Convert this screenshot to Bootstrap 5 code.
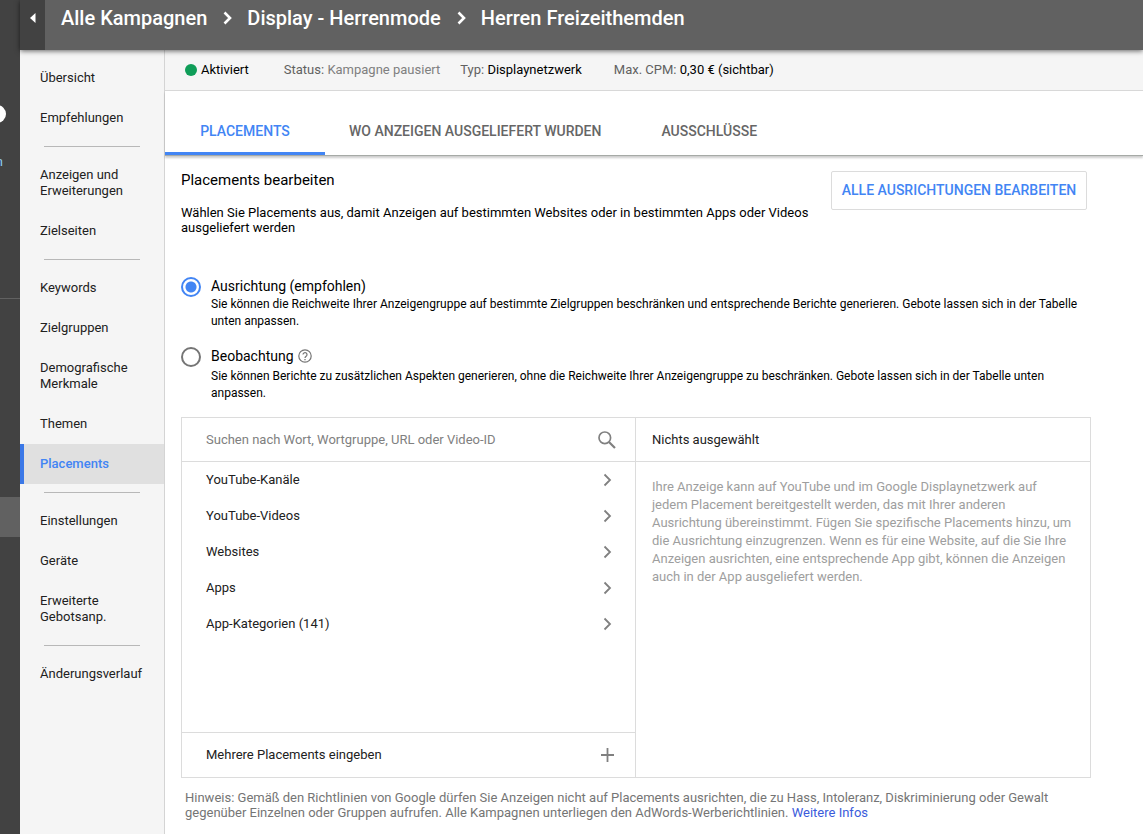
<!DOCTYPE html>
<html lang="de">
<head>
<meta charset="utf-8">
<meta name="viewport" content="width=device-width, initial-scale=1">
<title>Herren Freizeithemden – Placements</title>
<link href="https://cdn.jsdelivr.net/npm/bootstrap@5.3.0/dist/css/bootstrap.min.css" rel="stylesheet">
<style>
  :root { --blue: #4285f4; --line: #dcdcdc; --dark: #424242; }
  body { font-family: Roboto, "Liberation Sans", sans-serif; font-size: 13px; line-height: 16px; color: #212121; background: #fff; }
  .rail { width: 20px; background: var(--dark); overflow: hidden; }
  .rail-top { height: 105px; }
  .rail-dot { width: 20px; height: 18px; border-radius: 9px; background: #fff; margin-left: -14px; }
  .rail-name { margin-top: 31px; height: 143px; display: flex; justify-content: flex-end; width: 3px; color: #8ecdf5; }
  .rail-rule { border-top: 1px solid #616161; height: 199px; margin-top: 1px; }
  .rail-current { height: 40px; background: #616161; }

  .topbar { height: 50px; background: #616161; box-shadow: 0 1px 5px rgba(0,0,0,.6); z-index: 2; }
  .topbar .toggle { width: 25px; background: var(--dark); height: 50px; padding: 11px 0 0 8px; }
  .crumbs { font-size: 20px; line-height: 24px; font-weight: 500; padding: 6px 0 0 16px; }
  .crumbs a, .crumbs span { color: #fff; text-decoration: none; }

  .side { width: 145px; background: #f5f5f5; border-right: 1px solid #d4d4d4; padding-top: 8px; }
  .side .nav-link { color: #212121; padding: 12px 8px 12px 16px; border-left: 4px solid transparent; }
  .side .nav-link.active { color: var(--blue); background: #e0e0e0; border-color: #3b78e7; font-weight: 500; }
  .side hr { margin: 8px 24px; border-color: #b8b8b8; opacity: 1; }

  .status { height: 41px; background: #f5f5f5; border-bottom: 1px solid #d8d8d8; padding-left: 20px; color: #000; }
  .status .key { color: #616161; }
  .status .pale { color: #808080; }
  .status .state { margin-right: 35px; }
  .dot { width: 12px; height: 12px; border-radius: 50%; background: #0f9d58; }

  .tabs { height: 65px; padding-top: 20px; border-bottom: 1px solid #a6aaa6; box-shadow: 0 2px 2px rgba(0,0,0,.2); font-size: 14px; font-weight: 500; }
  .tabs .nav-link { color: #666; padding: 12px 24px; height: 44px; text-transform: uppercase; border-bottom: 3px solid transparent; }
  .tabs .nav-link.active { width: 160px; text-align: center; color: var(--blue); border-color: var(--blue); padding: 12px 0; }
  .tabs .nav-link:last-child { margin-left: 12px; }

  .main-area { padding: 14px 52px 12px 16px; color: #000; }
  .intro { padding-right: 4px; min-height: 107px; }
  .intro h1 { font-size: 15px; line-height: 20px; font-weight: 400; margin: 0 0 15px; }
  .intro p { line-height: 15px; margin: 0; }
  .btn-edit { color: var(--blue); border: 1px solid var(--line); border-radius: 2px; font-size: 14px; line-height: 21px; font-weight: 500; min-width: 256px; padding: 8px; margin: 1px 0 0 16px; white-space: nowrap; text-transform: uppercase; }

  .choice { min-height: 0; padding: 0; margin: 0; gap: 10px; }
  .choice .form-check-input { width: 20px; height: 20px; flex: none; margin: 0; float: none; border: 2px solid #757575; background: #fff; }
  .choice .form-check-input:checked { border-color: var(--blue); background: radial-gradient(circle, var(--blue) 5px, #fff 6px); }
  .choice label { font-size: 14px; line-height: 18px; }
  .choice p { font-size: 12px; line-height: 17px; margin: 1px 0 0; }
  .choice + .choice { margin-top: 17px; }
  .choice + .choice p { margin-top: 3px; }
  .help { vertical-align: -2px; margin-left: 1px; }

  .picker { border: 1px solid var(--line); color: #212121; min-height: 361px; margin-top: 15px; }
  .pick-left { border-right: 1px solid var(--line); }
  .pick-head { height: 44px; border-bottom: 1px solid var(--line); }
  .pick-left .pick-head { padding: 0 19px 0 24px; }
  .pick-head input { font-size: 13px; line-height: 16px; color: #212121; }
  .pick-head input::placeholder { color: #808080; opacity: 1; }
  .pick-left button { border: 0; background: none; font-size: 13px; line-height: 16px; color: #212121; padding: 0 16px 0 24px; height: 36px; }
  .pick-left .bulk { border-top: 1px solid var(--line); height: 45px; }
  .empty { color: #9e9e9e; line-height: 18px; padding: 16px; margin: 0; }
  .hint { color: #757575; font-size: 13px; line-height: 15px; padding: 12px 16px 0 4px; margin: 0; }
  .hint a { color: #3b5bdb; text-decoration: none; }
</style>
</head>
<body>
<div class="d-flex min-vh-100">
  <aside class="rail flex-shrink-0">
    <div class="rail-top"></div>
    <div class="rail-dot"></div>
    <div class="rail-name"><span>Kampagnen</span></div>
    <div class="rail-rule"></div>
    <div class="rail-current"></div>
  </aside>

  <div class="flex-grow-1 d-flex flex-column">
    <header class="topbar d-flex position-relative">
      <button class="toggle border-0 text-start d-flex" type="button" aria-label="Navigation einklappen">
        <svg width="12" height="14" viewBox="0 0 12 14"><path d="M7.5 2v10L2 7z" fill="#fff"/></svg>
      </button>
      <nav class="crumbs d-flex" aria-label="Breadcrumb">
        <a href="#">Alle Kampagnen</a>
        <svg width="40" height="24" viewBox="0 0 40 24" fill="none" stroke="#fff" stroke-width="2.6"><path d="M17.5 6.5l5.5 5.5-5.5 5.5"/></svg>
        <a href="#">Display - Herrenmode</a>
        <svg width="40" height="24" viewBox="0 0 40 24" fill="none" stroke="#fff" stroke-width="2.6"><path d="M17.5 6.5l5.5 5.5-5.5 5.5"/></svg>
        <span>Herren Freizeithemden</span>
      </nav>
    </header>

    <div class="d-flex flex-grow-1">
      <nav class="side flex-shrink-0 nav flex-column flex-nowrap">
        <a class="nav-link" href="#">Übersicht</a>
        <a class="nav-link" href="#">Empfehlungen</a>
        <hr>
        <a class="nav-link" href="#">Anzeigen und Erweiterungen</a>
        <a class="nav-link" href="#">Zielseiten</a>
        <hr>
        <a class="nav-link" href="#">Keywords</a>
        <a class="nav-link" href="#">Zielgruppen</a>
        <a class="nav-link" href="#">Demografische Merkmale</a>
        <a class="nav-link" href="#">Themen</a>
        <a class="nav-link active" href="#" aria-current="page">Placements</a>
        <hr>
        <a class="nav-link" href="#">Einstellungen</a>
        <a class="nav-link" href="#">Geräte</a>
        <a class="nav-link" href="#">Erweiterte Gebotsanp.</a>
        <hr>
        <a class="nav-link" href="#">Änderungsverlauf</a>
      </nav>

      <div class="flex-grow-1">
        <div class="status d-flex align-items-center">
          <span class="dot me-1"></span><span class="state">Aktiviert</span>
          <span><span class="key">Status:</span> <span class="pale">Kampagne pausiert</span></span>
          <span class="ms-3 ps-1"><span class="key">Typ:</span> Displaynetzwerk</span>
          <span class="ms-4 ps-2"><span class="key">Max. CPM:</span> 0,30 € (sichtbar)</span>
        </div>

        <nav class="tabs nav">
          <a class="nav-link active" href="#" aria-current="true">Placements</a>
          <a class="nav-link" href="#">Wo Anzeigen ausgeliefert wurden</a>
          <a class="nav-link" href="#">Ausschlüsse</a>
        </nav>

        <main class="main-area">
          <div class="intro d-flex align-items-start justify-content-between">
            <div>
              <h1>Placements bearbeiten</h1>
              <p>Wählen Sie Placements aus, damit Anzeigen auf bestimmten Websites oder in bestimmten Apps oder Videos ausgeliefert werden</p>
            </div>
            <button class="btn btn-edit" type="button">Alle Ausrichtungen bearbeiten</button>
          </div>

          <div class="choice form-check d-flex">
            <input class="form-check-input" type="radio" name="mode" id="mode-target" checked>
            <div>
              <label for="mode-target">Ausrichtung (empfohlen)</label>
              <p>Sie können die Reichweite Ihrer Anzeigengruppe auf bestimmte Zielgruppen beschränken und entsprechende Berichte generieren. Gebote lassen sich in der Tabelle unten anpassen.</p>
            </div>
          </div>
          <div class="choice form-check d-flex">
            <input class="form-check-input" type="radio" name="mode" id="mode-observe">
            <div>
              <label for="mode-observe">Beobachtung</label>
              <svg class="help" width="14" height="14" viewBox="0 0 14 14" fill="none" stroke="#757575"><circle cx="7" cy="7" r="6.2" stroke-width="1.2"/><path d="M5 5.6a2 2 0 1 1 3.3 1.5C7.5 7.7 7 8 7 9" stroke-width="1.2"/><path d="M7 9.9v1.3" stroke-width="1.3"/></svg>
              <p>Sie können Berichte zu zusätzlichen Aspekten generieren, ohne die Reichweite Ihrer Anzeigengruppe zu beschränken. Gebote lassen sich in der Tabelle unten anpassen.</p>
            </div>
          </div>

          <section class="picker row g-0">
            <div class="pick-left col-6 d-flex flex-column">
              <div class="pick-head d-flex align-items-center">
                <input class="flex-grow-1 border-0 p-0 bg-transparent" type="text" placeholder="Suchen nach Wort, Wortgruppe, URL oder Video-ID" aria-label="Placements suchen">
                <svg width="18" height="18" viewBox="0 0 18 18" fill="none" stroke="#808080"><circle cx="6.8" cy="6.8" r="5.8" stroke-width="1.7"/><path d="M11 11l6 6" stroke-width="2.2"/></svg>
              </div>
              <button class="d-flex align-items-center justify-content-between" type="button">YouTube-Kanäle<svg width="24" height="24" viewBox="0 0 24 24" fill="none" stroke="#808080" stroke-width="1.8"><path d="M9.5 6.5L15 12l-5.5 5.5"/></svg></button>
              <button class="d-flex align-items-center justify-content-between" type="button">YouTube-Videos<svg width="24" height="24" viewBox="0 0 24 24" fill="none" stroke="#808080" stroke-width="1.8"><path d="M9.5 6.5L15 12l-5.5 5.5"/></svg></button>
              <button class="d-flex align-items-center justify-content-between" type="button">Websites<svg width="24" height="24" viewBox="0 0 24 24" fill="none" stroke="#808080" stroke-width="1.8"><path d="M9.5 6.5L15 12l-5.5 5.5"/></svg></button>
              <button class="d-flex align-items-center justify-content-between" type="button">Apps<svg width="24" height="24" viewBox="0 0 24 24" fill="none" stroke="#808080" stroke-width="1.8"><path d="M9.5 6.5L15 12l-5.5 5.5"/></svg></button>
              <button class="d-flex align-items-center justify-content-between" type="button">App-Kategorien (141)<svg width="24" height="24" viewBox="0 0 24 24" fill="none" stroke="#808080" stroke-width="1.8"><path d="M9.5 6.5L15 12l-5.5 5.5"/></svg></button>
              <button class="bulk mt-auto d-flex align-items-center justify-content-between" type="button">Mehrere Placements eingeben<svg width="24" height="24" viewBox="0 0 24 24" fill="none" stroke="#808080" stroke-width="1.8"><path d="M6 12h13M12.5 5v14"/></svg></button>
            </div>
            <div class="col-6">
              <div class="pick-head d-flex align-items-center px-3">Nichts ausgewählt</div>
              <p class="empty">Ihre Anzeige kann auf YouTube und im Google Displaynetzwerk auf jedem Placement bereitgestellt werden, das mit Ihrer anderen Ausrichtung übereinstimmt. Fügen Sie spezifische Placements hinzu, um die Ausrichtung einzugrenzen. Wenn es für eine Website, auf die Sie Ihre Anzeigen ausrichten, eine entsprechende App gibt, können die Anzeigen auch in der App ausgeliefert werden.</p>
            </div>
          </section>

          <p class="hint">Hinweis: Gemäß den Richtlinien von Google dürfen Sie Anzeigen nicht auf Placements ausrichten, die zu Hass, Intoleranz, Diskriminierung oder Gewalt gegenüber Einzelnen oder Gruppen aufrufen. Alle Kampagnen unterliegen den AdWords-Werberichtlinien. <a href="#">Weitere Infos</a></p>
        </main>
      </div>
    </div>
  </div>
</div>
<script src="https://cdn.jsdelivr.net/npm/bootstrap@5.3.0/dist/js/bootstrap.bundle.min.js"></script>
</body>
</html>
